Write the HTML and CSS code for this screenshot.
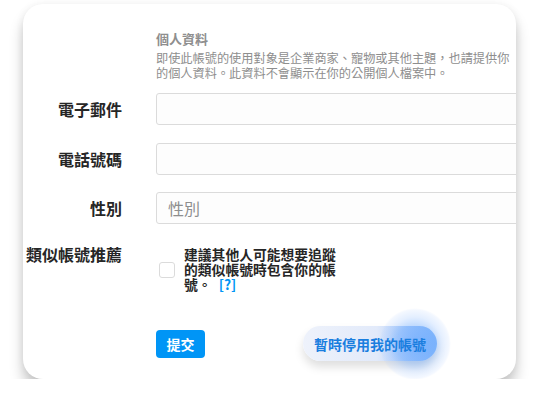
FILE: index.html
```html
<!DOCTYPE html>
<html lang="zh-Hant">
<head>
<meta charset="utf-8">
<title>編輯個人檔案</title>
<link rel="stylesheet" href="styles.css">
</head>
<body>
<div class="card">
  <div class="intro">
    <h2 class="intro-title">個人資料</h2>
    <p class="intro-desc">即使此帳號的使用對象是企業商家、寵物或其他主題，也請提供你的個人資料。此資料不會顯示在你的公開個人檔案中。</p>
  </div>
  <div class="row">
    <label class="label">電子郵件</label>
    <input class="field" type="text">
  </div>
  <div class="row">
    <label class="label">電話號碼</label>
    <input class="field" type="text">
  </div>
  <div class="row">
    <label class="label">性別</label>
    <input class="field" type="text" placeholder="性別">
  </div>
  <div class="row row-top">
    <label class="label label-top">類似帳號推薦</label>
    <div class="check">
      <span class="box"></span>
      <span class="check-text">建議其他人可能想要追蹤的類似帳號時包含你的帳號。 <a class="help">[?]</a></span>
    </div>
  </div>
  <div class="actions">
    <button class="submit">提交</button>
    <button class="pill"><span class="glow"></span><span class="pill-text">暫時停用我的帳號</span></button>
  </div>
</div>
</body>
</html>
```
FILE: styles.css
```css
html, body {
  margin: 0;
  padding: 0;
  background: #ffffff;
}
body {
  font-family: "Noto Sans CJK TC", "Noto Sans", sans-serif;
  color: #262626;
  padding-top: 4px;
}
.card {
  box-sizing: border-box;
  margin-left: 23px;
  width: 493px;
  height: 375px;
  background: #fff;
  border-radius: 20px;
  box-shadow: 0 11px 14px rgba(0, 0, 0, 0.22), 0 0 8px rgba(0, 0, 0, 0.06);
  overflow: hidden;
  padding-top: 26px;
}
.intro {
  margin-left: 133px;
}
.intro-title {
  margin: 0;
  font-size: 13px;
  line-height: 17px;
  font-weight: 700;
  color: #8e8e8e;
}
.intro-desc {
  margin: 4px 0 0;
  width: 362px;
  font-size: 12.2px;
  line-height: 15px;
  color: #8e8e8e;
}
.row {
  display: grid;
  grid-template-columns: 99px 380px;
  column-gap: 34px;
  align-items: center;
  margin-top: 17.5px;
}
.intro + .row {
  margin-top: 12px;
}
.row-top {
  align-items: start;
  margin-top: 23px;
}
.label {
  text-align: right;
  font-size: 16px;
  font-weight: 700;
  color: #262626;
  white-space: nowrap;
}
.label-top {
  line-height: 15px;
  padding-top: 0;
}
.field {
  box-sizing: border-box;
  height: 32px;
  width: 380px;
  border: 1px solid #dbdbdb;
  border-radius: 3px;
  background: #fdfdfd;
  padding: 0 11px;
  font-family: "Noto Sans CJK TC", sans-serif;
  font-size: 16px;
  color: #262626;
  outline: none;
}
.field::placeholder {
  color: #8e8e8e;
}
.check {
  display: flex;
  align-items: center;
  gap: 9px;
  padding-left: 3px;
}
.box {
  box-sizing: border-box;
  width: 16px;
  height: 16px;
  border: 1px solid #dbdbdb;
  border-radius: 3px;
  background: #fff;
  flex: none;
}
.check-text {
  width: 156px;
  font-size: 13.8px;
  line-height: 15px;
  font-weight: 700;
  color: #262626;
}
.help {
  display: inline-block;
  line-height: 15px;
  margin-left: 4px;
  color: #0095f6;
  font-weight: 700;
}
.actions {
  display: flex;
  align-items: center;
  margin-left: 133px;
  margin-top: 34px;
}
.submit {
  height: 28px;
  width: 49px;
  padding: 0;
  border: 0;
  border-radius: 4px;
  background: #0095f6;
  color: #fff;
  font-family: "Noto Sans CJK TC", sans-serif;
  font-size: 14px;
  font-weight: 700;
}
.pill {
  position: relative;
  margin-left: 98px;
  height: 35px;
  width: 134px;
  padding: 0;
  border: 0;
  border-radius: 18px;
  background: linear-gradient(90deg, #eef2fb 0%, #e2eafa 55%, #a9cbfb 80%, #84b8fb 100%);
  box-shadow: 0 6px 10px rgba(0, 0, 0, 0.13);
  font-family: "Noto Sans CJK TC", sans-serif;
}
.glow {
  position: absolute;
  left: 76px;
  top: -18px;
  width: 72px;
  height: 72px;
  border-radius: 50%;
  background: radial-gradient(circle, rgba(90, 160, 255, 0.5) 0, rgba(100, 165, 255, 0.38) 19px, rgba(130, 180, 255, 0.22) 27px, rgba(160, 195, 255, 0.12) 34px, rgba(255, 255, 255, 0) 36px);
  z-index: 0;
}
.pill-text {
  position: relative;
  z-index: 1;
  font-size: 14px;
  font-weight: 700;
  color: #1a7edf;
}
```
